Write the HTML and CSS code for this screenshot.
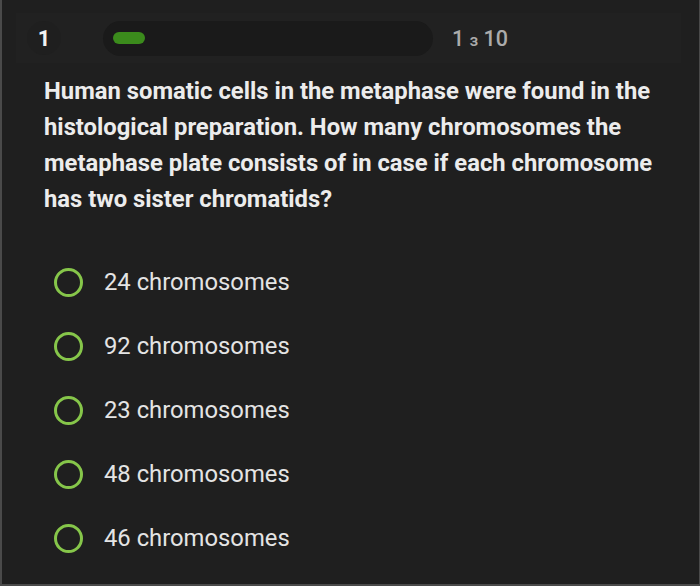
FILE: index.html
```html
<!DOCTYPE html>
<html>
<head>
<meta charset="utf-8">
<link rel="stylesheet" href="styles.css">
</head>
<body>
<div class="frame">
  <div class="header">
    <div class="num">1</div>
    <div class="track"><div class="fill"></div></div>
    <div class="count">1 <span class="z">з</span> 10</div>
  </div>
  <p class="question">Human somatic cells in the metaphase were found in the histological preparation. How many chromosomes the metaphase plate consists of in case if each chromosome has two sister chromatids?</p>
  <ul class="options">
    <li class="option"><span class="radio"></span><span class="label">24 chromosomes</span></li>
    <li class="option"><span class="radio"></span><span class="label">92 chromosomes</span></li>
    <li class="option"><span class="radio"></span><span class="label">23 chromosomes</span></li>
    <li class="option"><span class="radio"></span><span class="label">48 chromosomes</span></li>
    <li class="option"><span class="radio"></span><span class="label">46 chromosomes</span></li>
  </ul>
</div>
</body>
</html>
```
FILE: styles.css
```css
html, body {
  margin: 0;
  padding: 0;
  background: #1f1f1f;
}
.frame {
  box-sizing: border-box;
  width: 700px;
  height: 586px;
  background: #1f1f1f;
  border-left: 2px solid #4a4a4a;
  border-right: 1px solid #4a4a4a;
  border-bottom: 2px solid #4a4a4a;
  font-family: Roboto, "Liberation Sans", sans-serif;
  overflow: hidden;
  padding-top: 13px;
}
.header {
  display: flex;
  align-items: center;
  height: 50px;
  margin: 0 18px 0 14px;
  background: #212121;
}
.num {
  width: 34px;
  height: 34px;
  margin-left: 11px;
  border-radius: 50%;
  background: #1f1f1f;
  color: #f2f2f2;
  font-weight: 700;
  font-size: 22px;
  display: flex;
  align-items: center;
  justify-content: center;
}
.track {
  margin-left: 42px;
  width: 330px;
  height: 35px;
  border-radius: 18px;
  background: #1a1a1a;
  display: flex;
  align-items: center;
  padding-left: 10px;
  box-sizing: border-box;
}
.fill {
  width: 32px;
  height: 12px;
  border-radius: 6px;
  background: #3b8b1c;
}
.count {
  margin-left: 19px;
  color: #ababab;
  font-size: 21.5px;
  font-weight: 500;
}
.count .z {
  font-size: 17px;
}
.question {
  margin: 10px 20px 0 42px;
  color: #ececec;
  font-weight: 700;
  font-size: 23.8px;
  line-height: 36px;
}
.options {
  list-style: none;
  margin: 33px 0 0 0;
  padding: 0;
}
.option {
  display: flex;
  align-items: center;
  height: 64px;
  padding-left: 52px;
}
.radio {
  box-sizing: border-box;
  width: 29px;
  height: 29px;
  border: 3px solid #86c64a;
  border-radius: 50%;
}
.label {
  margin-left: 21px;
  color: #e4e4e4;
  font-size: 23.8px;
}
```
